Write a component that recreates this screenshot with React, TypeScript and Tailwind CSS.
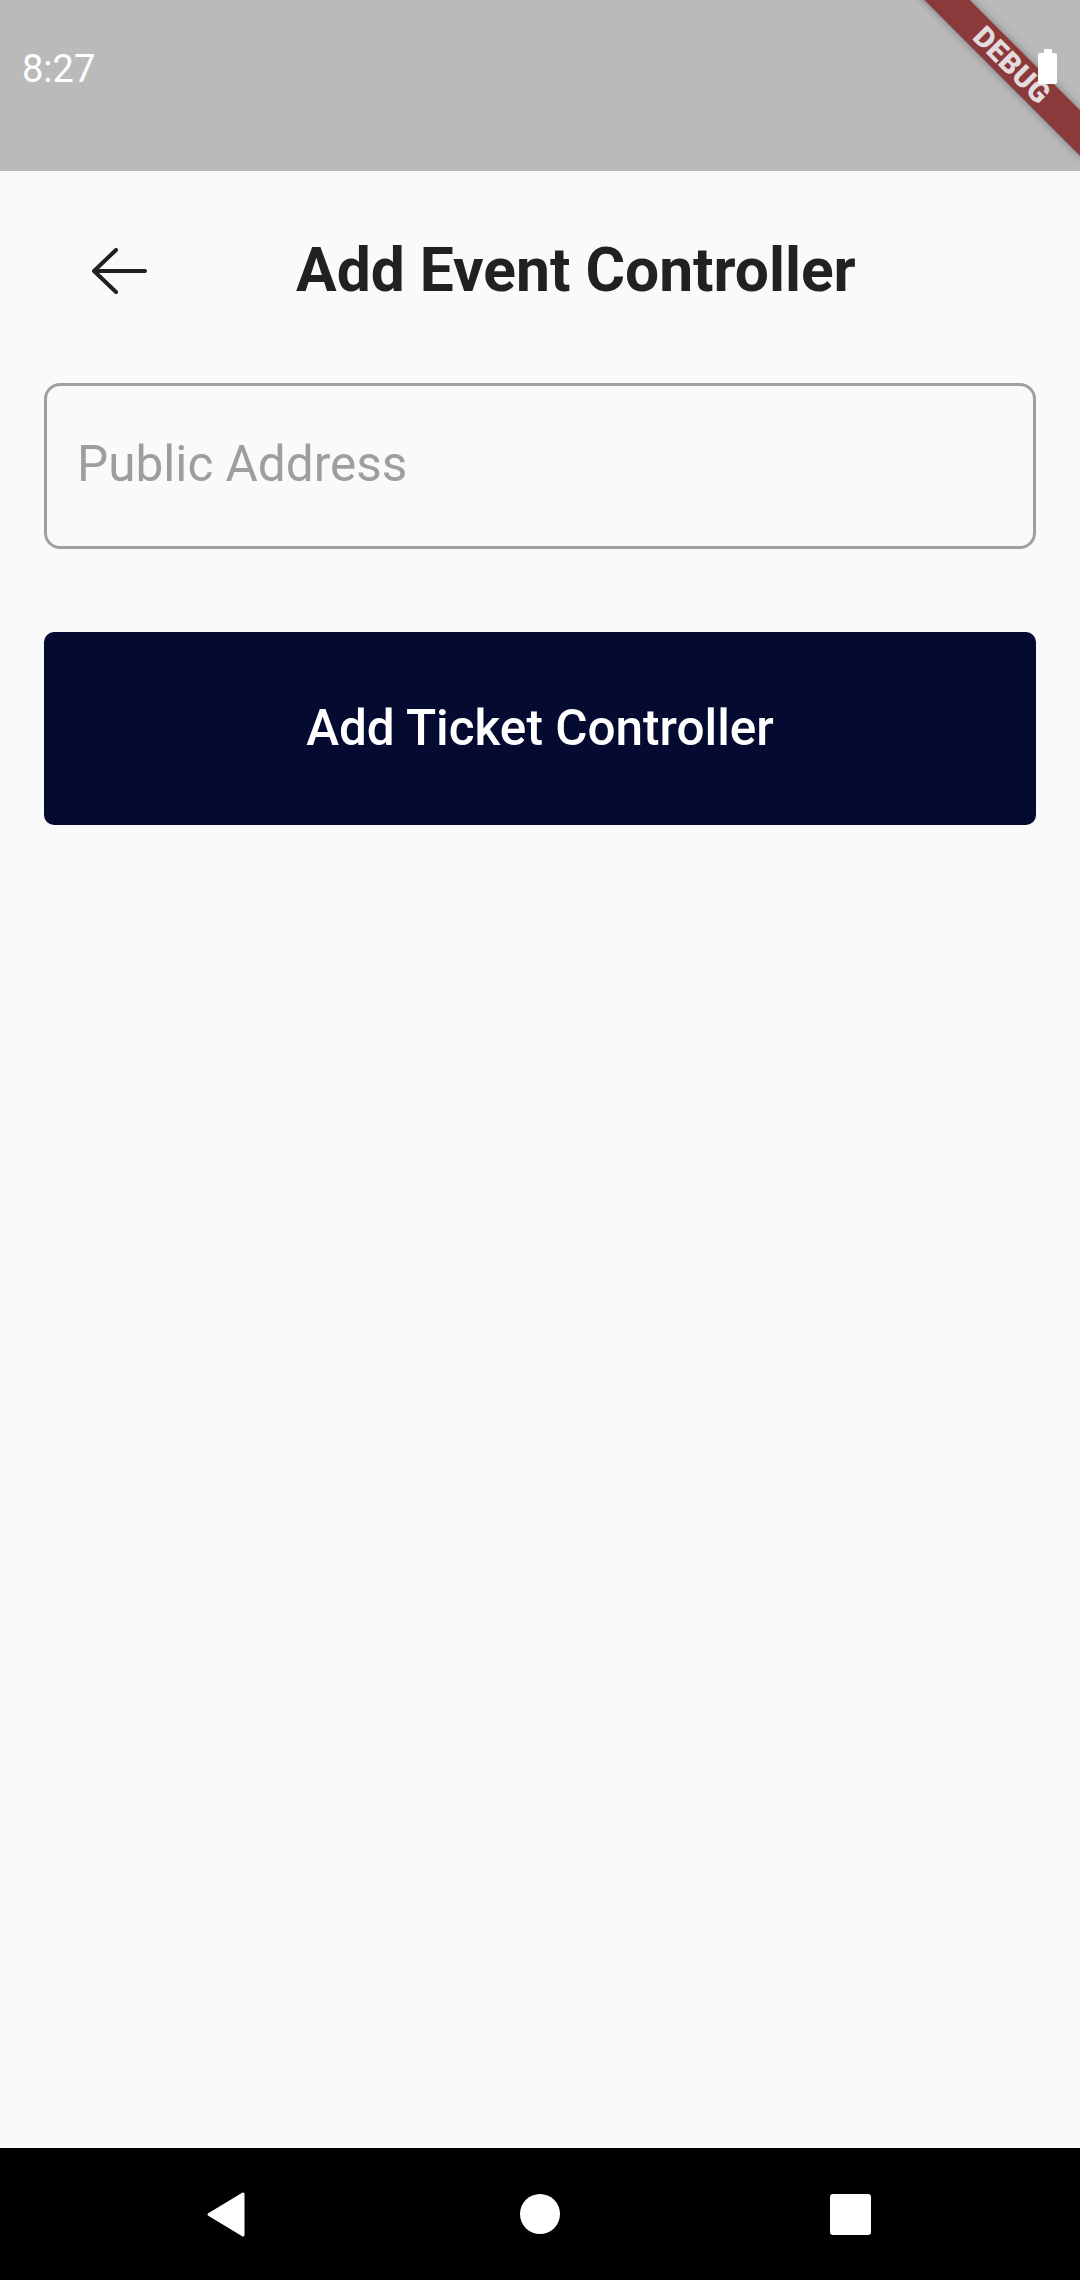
import React from "react";

const StatusBar = () => {
  return (
    <div className="relative h-[171px] bg-[#bababa] flex items-start">
      <span className="mt-[44px] ml-[22px] text-[38px] leading-[50px] text-white">8:27</span>
      {/* battery */}
      <div className="absolute z-10 right-[23px] top-[49px] flex flex-col items-center">
        <div className="w-[8px] h-[4px] bg-white rounded-t-[1px]" />
        <div className="w-[19px] h-[31px] bg-white rounded-[2px]" />
      </div>
    </div>
  );
};

const DebugBanner = () => {
  return (
    <div className="pointer-events-none absolute top-0 right-0 w-[180px] h-[180px] overflow-hidden">
      <div className="absolute left-[-3px] top-[49px] w-[230px] h-[32px] rotate-45 bg-[#8a3a3b] shadow-[0_0_8px_rgba(0,0,0,0.35)] flex items-center justify-center">
        <span className="text-[29px] font-black tracking-[0.5px] text-[#e4dcdc] leading-none">DEBUG</span>
      </div>
    </div>
  );
};

const NavBar = () => {
  return (
    <div className="h-[132px] bg-black flex items-center">
      <svg className="ml-[204px]" width="42" height="47" viewBox="0 0 42 47">
        <path d="M39 3 L39 44 L5 23.5 Z" fill="white" stroke="white" strokeWidth="3" strokeLinejoin="round" />
      </svg>
      <div className="ml-[274px] w-[40px] h-[40px] rounded-full bg-white" />
      <div className="ml-[270px] w-[41px] h-[41px] rounded-[3px] bg-white" />
    </div>
  );
};

export default function App() {
  return (
    <div
      className="relative w-[1080px] h-[2280px] flex flex-col bg-[#fafafa]"
      style={{ fontFamily: "Roboto, 'Noto Sans', sans-serif" }}
    >
      <StatusBar />
      <DebugBanner />

      <main className="flex-1 flex flex-col bg-[#fafafa]">
        {/* Header */}
        <div className="mt-[50px] h-[100px] flex items-center">
          <button className="ml-[90px] w-[58px] h-[50px] flex items-center justify-center">
            <svg width="58" height="46" viewBox="0 0 58 46" fill="none">
              <path d="M55 23 H5" stroke="#212121" strokeWidth="4" strokeLinecap="round" />
              <path d="M26 2 L4 23 L26 44" stroke="#212121" strokeWidth="4" strokeLinecap="round" strokeLinejoin="round" />
            </svg>
          </button>
          <h1 className="ml-[148px] text-[60.5px] font-bold text-[#212121] leading-none">
            Add Event Controller
          </h1>
        </div>

        {/* Form */}
        <div className="px-[44px] mt-[62px] flex flex-col">
          <div className="h-[166px] border-[3px] border-[#a0a0a0] rounded-[16px] flex items-center pl-[30px] pr-[32px] pb-[4px]">
            <input
              type="text"
              placeholder="Public Address"
              className="w-full bg-transparent outline-none text-[49.5px] text-[#212121] placeholder:text-[#9e9e9e]"
            />
          </div>

          <button className="mt-[83px] h-[193px] w-full rounded-[10px] bg-[#050b30] text-white text-[49.5px] font-medium">
            Add Ticket Controller
          </button>
        </div>
      </main>

      <NavBar />
    </div>
  );
}
